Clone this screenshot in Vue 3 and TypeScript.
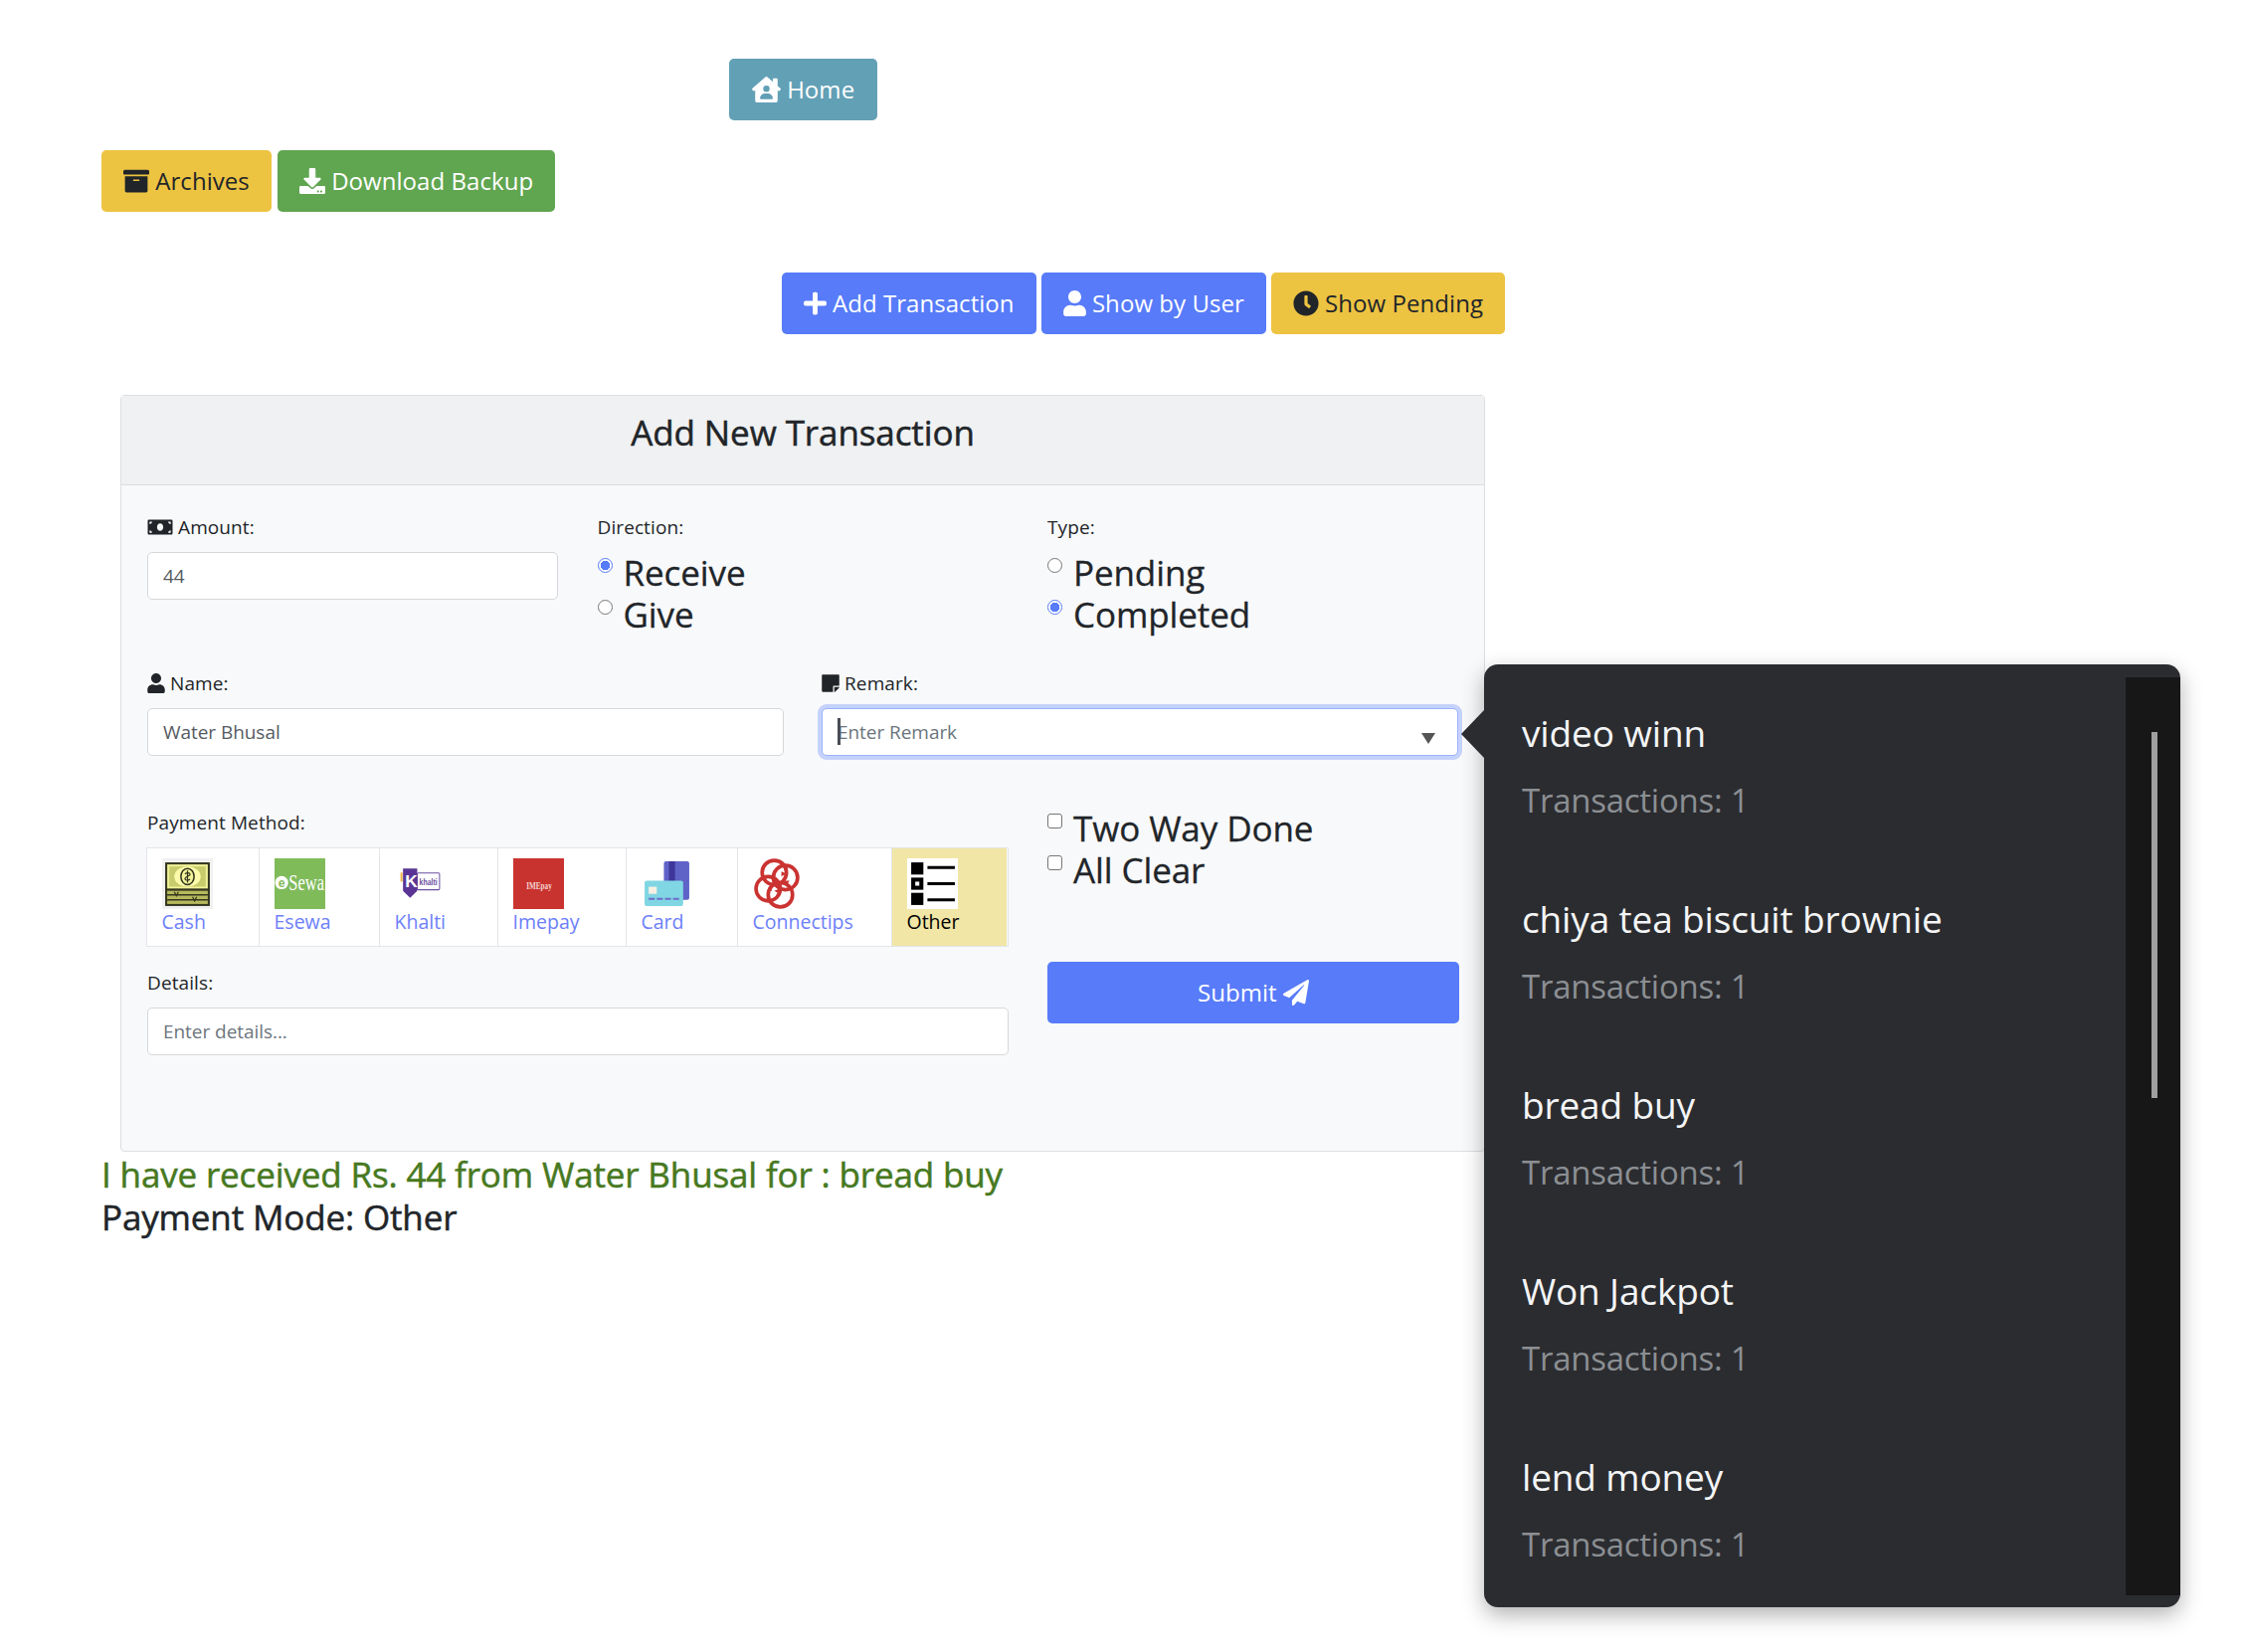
<template>
  <div class="page">
    <div class="container">
      <div class="home-row">
        <button class="btn info">
          <svg class="ico house" viewBox="0 0 576 512"><path d="M570.69,236.27,512,184.44V48a16,16,0,0,0-16-16H432a16,16,0,0,0-16,16V99.67L314.78,10.3C308.5,4.61,296.53,0,288,0s-20.46,4.61-26.74,10.3l-256,226A18.27,18.27,0,0,0,0,248.2a18.64,18.64,0,0,0,4.09,10.71L25.5,282.7a21.14,21.14,0,0,0,12,5.3,21.67,21.67,0,0,0,10.69-4.11l15.9-14V480a32,32,0,0,0,32,32H480a32,32,0,0,0,32-32V269.88l15.91,14A21.94,21.94,0,0,0,538.63,288a20.89,20.89,0,0,0,11.87-5.31l21.41-23.81A21.64,21.64,0,0,0,576,248.19,21,21,0,0,0,570.69,236.27ZM288,176a64,64,0,1,1-64,64A64,64,0,0,1,288,176ZM400,448H176a16,16,0,0,1-16-16,96,96,0,0,1,96-96h64a96,96,0,0,1,96,96A16,16,0,0,1,400,448Z" /></svg>
          Home
        </button>
      </div>

      <div class="backup-row">
        <button class="btn warning">
          <svg class="ico" viewBox="0 0 512 512"><path d="M32 448c0 17.7 14.3 32 32 32h384c17.7 0 32-14.3 32-32V160H32v288zm160-212c0-6.6 5.4-12 12-12h104c6.6 0 12 5.4 12 12v8c0 6.6-5.4 12-12 12H204c-6.6 0-12-5.4-12-12v-8zM480 32H32C14.3 32 0 46.3 0 64v48c0 8.8 7.2 16 16 16h480c8.8 0 16-7.2 16-16V64c0-17.7-14.3-32-32-32z" /></svg>
          Archives
        </button>
        <button class="btn success">
          <svg class="ico" viewBox="0 0 512 512"><path d="M216 0h80c13.3 0 24 10.7 24 24v168h87.7c17.8 0 26.7 21.5 14.1 34.1L269.7 378.3c-7.5 7.5-19.8 7.5-27.3 0L90.1 226.1c-12.6-12.6-3.7-34.1 14.1-34.1H192V24c0-13.3 10.7-24 24-24zm296 376v112c0 13.3-10.7 24-24 24H24c-13.3 0-24-10.7-24-24V376c0-13.3 10.7-24 24-24h146.7l49 49c20.1 20.1 52.5 20.1 72.6 0l49-49H488c13.3 0 24 10.7 24 24zm-124 88c0-11-9-20-20-20s-20 9-20 20 9 20 20 20 20-9 20-20zm64 0c0-11-9-20-20-20s-20 9-20 20 9 20 20 20 20-9 20-20z" /></svg>
          Download Backup
        </button>
      </div>

      <div class="action-row">
        <button class="btn primary">
          <svg class="ico narrow" viewBox="0 0 448 512"><path d="M416 208H272V64c0-17.67-14.33-32-32-32h-32c-17.67 0-32 14.33-32 32v144H32c-17.67 0-32 14.33-32 32v32c0 17.67 14.33 32 32 32h144v144c0 17.67 14.33 32 32 32h32c17.67 0 32-14.33 32-32V304h144c17.67 0 32-14.33 32-32v-32c0-17.67-14.33-32-32-32z" /></svg>
          Add Transaction
        </button>
        <button class="btn primary">
          <svg class="ico narrow" viewBox="0 0 448 512"><path :d="userPath" /></svg>
          Show by User
        </button>
        <button class="btn warning">
          <svg class="ico" viewBox="0 0 512 512"><path d="M256,8C119,8,8,119,8,256S119,504,256,504,504,393,504,256,393,8,256,8Zm92.49,313h0l-20,25a16,16,0,0,1-22.49,2.5h0l-67-49.72a40,40,0,0,1-15-31.23V112a16,16,0,0,1,16-16h32a16,16,0,0,1,16,16V256l58,42.5A16,16,0,0,1,348.49,321Z" /></svg>
          Show Pending
        </button>
      </div>

      <div class="card">
        <h2 class="card-title">Add New Transaction</h2>
        <div class="card-body">
          <div class="row-three">
            <div>
              <label class="label">
                <svg class="ico-sm wide" viewBox="0 0 640 512"><path d="M608 64H32C14.33 64 0 78.33 0 96v320c0 17.67 14.33 32 32 32h576c17.67 0 32-14.33 32-32V96c0-17.67-14.33-32-32-32zM48 400v-64c35.35 0 64 28.65 64 64H48zm0-224v-64h64c0 35.35-28.65 64-64 64zm272 176c-44.19 0-80-42.99-80-96 0-53.02 35.82-96 80-96s80 42.98 80 96c0 53.03-35.83 96-80 96zm272 48h-64c0-35.35 28.65-64 64-64v64zm0-224c-35.35 0-64-28.65-64-64h64v64z" /></svg>
                Amount:
              </label>
              <input v-model="amount" class="input" type="text" />
            </div>
            <div>
              <label class="label">Direction:</label>
              <label v-for="d in directions" :key="d" class="choice">
                <input v-model="direction" class="radio" type="radio" :value="d" />
                <span>{{ d }}</span>
              </label>
            </div>
            <div>
              <label class="label">Type:</label>
              <label v-for="t in types" :key="t" class="choice">
                <input v-model="txType" class="radio" type="radio" :value="t" />
                <span>{{ t }}</span>
              </label>
            </div>
          </div>

          <div class="row-two">
            <div>
              <label class="label">
                <svg class="ico-sm" viewBox="0 0 448 512"><path :d="userPath" /></svg>
                Name:
              </label>
              <input v-model="name" class="input" type="text" />
            </div>
            <div>
              <label class="label">
                <svg class="ico-sm" viewBox="0 0 448 512"><path d="M312 320h136V56c0-13.3-10.7-24-24-24H24C10.7 32 0 42.7 0 56v400c0 13.3 10.7 24 24 24h264V344c0-13.2 10.8-24 24-24zm129 55l-98 98c-4.5 4.5-10.6 7-17 7h-6V352h128v6.1c0 6.3-2.5 12.4-7 16.9z" /></svg>
                Remark:
              </label>
              <div class="remark-wrap">
                <input class="input focused" type="text" placeholder="Enter Remark" />
                <span class="caret"></span>
                <span class="drop-arrow"></span>
              </div>
            </div>
          </div>

          <div class="row-bottom">
            <div>
              <label class="label">Payment Method:</label>
              <div class="methods">
                <div
                  v-for="m in methods"
                  :key="m"
                  class="method"
                  :class="{ active: method === m }"
                  @click="method = m"
                >
                  <svg v-if="m === 'Cash'" class="logo" viewBox="0 0 50 50">
                    <rect width="50" height="50" fill="#f1f1f1" />
                    <rect x="4" y="5" width="42" height="26" fill="#f2f29a" stroke="#33351f" stroke-width="2" />
                    <rect x="7" y="8" width="36" height="20" fill="#c9cc6c" />
                    <ellipse cx="25" cy="18" rx="13" ry="10" fill="#fbfbab" />
                    <ellipse cx="25" cy="18" rx="6.5" ry="8" fill="#f2f29a" stroke="#33351f" stroke-width="1.5" />
                    <path d="M25 12v12M22.5 15.5c2-2 5-1 5 .5s-5 2-5 4 3 2 5 .5" fill="none" stroke="#33351f" stroke-width="1.2" />
                    <rect x="4" y="31" width="42" height="15" fill="#b7ba5c" stroke="#33351f" stroke-width="2" />
                    <path d="M5 36h40M5 41h40" stroke="#33351f" stroke-width="1.5" />
                    <path d="M12 33l2 4 2-4M30 38l2 4 2-4" fill="none" stroke="#33351f" stroke-width="1.2" />
                  </svg>
                  <svg v-else-if="m === 'Esewa'" class="logo" viewBox="0 0 50 50">
                    <rect width="50" height="50" fill="#80bb5a" />
                    <circle cx="7" cy="24" r="6.5" fill="#fff" />
                    <text x="3.6" y="28" class="logo-e">e</text>
                    <text x="14" y="31" class="logo-sewa" textLength="35" lengthAdjust="spacingAndGlyphs">Sewa</text>
                  </svg>
                  <svg v-else-if="m === 'Khalti'" class="logo" viewBox="0 0 50 50">
                    <rect x="22" y="14.5" width="22" height="16.5" rx="1" fill="#fff" stroke="#6d4fa3" stroke-width="1" />
                    <text x="24" y="26.5" class="logo-khalti" textLength="18" lengthAdjust="spacingAndGlyphs">khalti</text>
                    <rect x="5.5" y="14" width="2" height="9" fill="#f0b64a" />
                    <path d="M8 10h14v22l-7 7-7-7z" fill="#5a3595" />
                    <text x="10" y="28" class="logo-k">K</text>
                  </svg>
                  <svg v-else-if="m === 'Imepay'" class="logo" viewBox="0 0 50 50">
                    <rect width="50" height="50" fill="#c9332f" />
                    <text x="13" y="30" class="logo-ime" textLength="25" lengthAdjust="spacingAndGlyphs">IMEpay</text>
                  </svg>
                  <svg v-else-if="m === 'Card'" class="logo" viewBox="0 0 50 50">
                    <rect x="22" y="3" width="25" height="38" rx="2" fill="#5f63c7" />
                    <rect x="27" y="3" width="6" height="38" fill="#3e3699" />
                    <rect x="3" y="22" width="38" height="25" rx="2" fill="#80d6e3" />
                    <rect x="7" y="28" width="8" height="7" fill="#f6f0e4" />
                    <path d="M7 40h30" stroke="#6a6bc9" stroke-width="2" stroke-dasharray="6 2" />
                  </svg>
                  <svg v-else-if="m === 'Connectips'" class="logo" viewBox="0 0 50 50">
                    <g fill="none" stroke="#ca3331" stroke-width="3.6">
                      <circle cx="21" cy="14" r="12" />
                      <circle cx="32" cy="19" r="12" />
                      <circle cx="15" cy="30" r="12" />
                      <circle cx="27" cy="36" r="12" />
                    </g>
                    <path d="M28 13l5 2-5 3zM31 22l2 5 3-5zM14 32l2-5 3 5zM26 30l-5 2 5 3z" fill="#ca3331" />
                  </svg>
                  <svg v-else class="logo" viewBox="0 0 50 50">
                    <rect width="50" height="50" fill="#fff" />
                    <rect x="4" y="4" width="12" height="12" />
                    <rect x="4" y="19" width="12" height="12" />
                    <rect x="8" y="23" width="4" height="4" fill="#fff" />
                    <rect x="4" y="34" width="12" height="12" />
                    <path d="M20 9h27M20 25h27M20 41h27" stroke="#000" stroke-width="3" />
                  </svg>
                  <span class="method-name">{{ m }}</span>
                </div>
              </div>
              <label class="label details-label">Details:</label>
              <input class="input" type="text" placeholder="Enter details..." />
            </div>
            <div>
              <label v-for="c in checks" :key="c" class="choice">
                <input class="check" type="checkbox" />
                <span>{{ c }}</span>
              </label>
              <button class="btn primary submit">
                Submit
                <svg class="ico-plane" viewBox="0 0 512 512"><path d="M476 3.2L12.5 270.6c-18.1 10.4-15.8 35.6 2.2 43.2L121 358.4l287.3-253.2c5.5-4.9 13.3 2.6 8.6 8.3L176 407v80.5c0 23.6 28.5 32.9 42.5 15.8L282 426l124.6 52.2c14.2 6 30.4-2.9 33-18.2l72-432C515 7.8 493.3-6.8 476 3.2z" /></svg>
              </button>
            </div>
          </div>
        </div>
      </div>

      <div class="message">
        <div class="message-green">I have received Rs. 44 from Water Bhusal for : bread buy</div>
        <div>Payment Mode: Other</div>
      </div>
    </div>

    <div class="popover">
      <span class="popover-arrow"></span>
      <div class="popover-list">
        <div v-for="s in suggestions" :key="s" class="suggestion">
          <div class="suggestion-name">{{ s }}</div>
          <div class="suggestion-count">Transactions: 1</div>
        </div>
      </div>
      <div class="scroll-track"><div class="scroll-thumb"></div></div>
    </div>
  </div>
</template>

<script setup lang="ts">
import { ref } from 'vue'

const userPath =
  'M224 256c70.7 0 128-57.3 128-128S294.7 0 224 0 96 57.3 96 128s57.3 128 128 128zm89.6 32h-16.7c-22.2 10.2-46.9 16-72.9 16s-50.6-5.8-72.9-16h-16.7C60.2 288 0 348.2 0 422.4V464c0 26.5 21.5 48 48 48h352c26.5 0 48-21.5 48-48v-41.6c0-74.2-60.2-134.4-134.4-134.4z'

const directions = ['Receive', 'Give']
const types = ['Pending', 'Completed']
const checks = ['Two Way Done', 'All Clear']
const methods = ['Cash', 'Esewa', 'Khalti', 'Imepay', 'Card', 'Connectips', 'Other']
const suggestions = ['video winn', 'chiya tea biscuit brownie', 'bread buy', 'Won Jackpot', 'lend money']

const amount = ref('44')
const name = ref('Water Bhusal')
const direction = ref('Receive')
const txType = ref('Completed')
const method = ref('Other')
</script>

<style>
html,
body {
  background: #fff;
}
</style>

<style scoped>
.page {
  position: relative;
  height: 1661px;
  overflow: hidden;
  font-family: 'Open Sans', 'Noto Sans', sans-serif;
  color: #212529;
}

.container {
  width: 1411px;
  margin-left: 102px;
  padding-top: 59px;
}

.home-row {
  text-align: center;
}

.backup-row {
  display: flex;
  gap: 6px;
  margin-top: 30px;
}

.action-row {
  display: flex;
  justify-content: flex-end;
  gap: 5px;
  margin-top: 61px;
}

.btn {
  height: 62px;
  padding: 0 22px 2px;
  border: none;
  border-radius: 5px;
  font-family: inherit;
  font-size: 24px;
  letter-spacing: 0.05px;
  white-space: nowrap;
}

.btn.info {
  padding: 0 23px 2px;
  background: #62a0b6;
  color: #fff;
}

.btn.warning {
  background: #edc342;
  color: #212529;
}

.btn.success {
  background: #60a550;
  color: #fff;
}

.btn.primary {
  background: #577bf9;
  color: #fff;
}

.ico {
  width: 26px;
  height: 26px;
  fill: currentColor;
  vertical-align: -4px;
}

.ico.house {
  width: 29px;
}

.ico.narrow {
  width: 23px;
}

.ico-sm {
  width: 18px;
  height: 20px;
  fill: currentColor;
  vertical-align: -3px;
}

.ico-sm.wide {
  width: 26px;
}

.ico-plane {
  width: 26px;
  height: 26px;
  fill: #fff;
  vertical-align: -4px;
}

.card {
  margin: 61px 20px 0 19px;
  height: 761px;
  box-sizing: border-box;
  border: 1.5px solid #dcdee0;
  border-radius: 4px;
  background: #f8f9fa;
}

.card-title {
  margin: 0;
  height: 90px;
  box-sizing: border-box;
  padding-top: 12px;
  border-bottom: 1.5px solid #dcdee0;
  background: #f0f1f2;
  font-size: 35px;
  font-weight: 400;
  line-height: 50px;
  letter-spacing: -0.1px;
  text-align: center;
  -webkit-text-stroke: 0.5px #212529;
}

.card-body {
  padding: 27px 25px 0 26px;
}

.row-three {
  display: grid;
  grid-template-columns: repeat(3, 413px);
  column-gap: 39.5px;
}

.row-two {
  display: grid;
  grid-template-columns: 640px 640px;
  column-gap: 38px;
  margin-top: 33px;
}

.row-bottom {
  display: grid;
  grid-template-columns: 866px 414px;
  column-gap: 39px;
  margin-top: 52px;
}

.label {
  display: block;
  height: 31px;
  margin-bottom: 9px;
  font-size: 19px;
  line-height: 31px;
  letter-spacing: 0.1px;
}

.details-label {
  margin-top: 21px;
  margin-bottom: 9px;
}

.input {
  display: block;
  width: 100%;
  height: 48px;
  box-sizing: border-box;
  padding: 0 15px;
  border: 1.5px solid #d6d8db;
  border-radius: 5px;
  background: #fff;
  color: #555b62;
  font-family: inherit;
  font-size: 19px;
  letter-spacing: -0.05px;
  outline: none;
}

.input::placeholder {
  color: #6c757d;
}

.input.focused {
  border-color: #9ab3fc;
  box-shadow: 0 0 0 4px #c5d2fb;
}

.remark-wrap {
  position: relative;
}

.caret {
  position: absolute;
  left: 16px;
  top: 10px;
  width: 3px;
  height: 27px;
  background: #4a4d55;
}

.drop-arrow {
  position: absolute;
  right: 23px;
  top: 25px;
  border-left: 7px solid transparent;
  border-right: 7px solid transparent;
  border-top: 11px solid #555;
}

.choice {
  display: flex;
  align-items: flex-start;
  gap: 11px;
  height: 42px;
  font-size: 35px;
  line-height: 42px;
  letter-spacing: -0.1px;
  -webkit-text-stroke: 0.3px #212529;
}

.radio,
.check {
  appearance: none;
  flex: none;
  width: 15px;
  height: 15px;
  margin: 6px 0 0;
  box-sizing: border-box;
  border: 1.5px solid #767676;
  background: #fff;
}

.radio {
  border-radius: 50%;
}

.radio:checked {
  border-color: #577bf9;
  background: radial-gradient(circle, #577bf9 0 4.5px, #fff 5px);
}

.check {
  border-radius: 3px;
}

.methods {
  display: grid;
  grid-template-columns: 112px 121px 119px 129px 112px 155px 116.5px;
  height: 100px;
  margin-left: -1.5px;
  box-sizing: border-box;
  border: 1.5px solid #e3e5e8;
}

.method {
  display: flex;
  flex-direction: column;
  padding: 9.5px 0 0 15px;
  border-left: 1.5px solid #e3e5e8;
  background: #fff;
  color: #6d7ff9;
  box-sizing: border-box;
}

.method:first-child {
  border-left: none;
}

.method.active {
  background: #f1e6a6;
  color: #000;
}

.logo {
  display: block;
  width: 51px;
  height: 51px;
}

.method-name {
  font-size: 19.5px;
  line-height: 26px;
}

.logo-e {
  font: 700 12px 'Liberation Sans', sans-serif;
  fill: #80bb5a;
}

.logo-sewa {
  font: 22px 'Liberation Serif', serif;
  fill: #fff;
}

.logo-khalti {
  font: 700 9px 'Liberation Sans', sans-serif;
  fill: #6d4fa3;
}

.logo-k {
  font: 700 17px 'Liberation Sans', sans-serif;
  fill: #fff;
}

.logo-ime {
  font: 700 10px 'Liberation Serif', serif;
  fill: #f3d4d0;
}

.submit {
  display: block;
  width: 100%;
  margin-top: 71px;
}

.message {
  margin-top: 1px;
  font-size: 35px;
  line-height: 43px;
  letter-spacing: -0.15px;
  -webkit-text-stroke: 0.5px #212529;
}

.message-green {
  color: #47791f;
  -webkit-text-stroke: 0.5px #47791f;
}

.popover {
  position: absolute;
  left: 1492px;
  top: 668px;
  display: flex;
  width: 700px;
  height: 948px;
  box-sizing: border-box;
  padding: 13px 0 12px;
  border-radius: 14px;
  background: #2b2c30;
  box-shadow: 0 8px 22px rgba(0, 0, 0, 0.3);
}

.popover-arrow {
  position: absolute;
  left: -23px;
  top: 46px;
  border-top: 24px solid transparent;
  border-bottom: 24px solid transparent;
  border-right: 23px solid #2b2c30;
}

.popover-list {
  flex: 1;
  padding: 26px 0 0 38px;
  overflow: hidden;
}

.suggestion {
  height: 187px;
}

.suggestion-name {
  color: #f4f5f6;
  font-size: 37px;
  line-height: 60px;
  letter-spacing: -0.15px;
}

.suggestion-count {
  margin-top: 11px;
  color: #8b8f93;
  font-size: 33px;
  line-height: 54px;
  letter-spacing: -0.25px;
}

.scroll-track {
  flex: none;
  width: 55px;
  padding: 55px 0 0 26px;
  box-sizing: border-box;
  background: #171717;
}

.scroll-thumb {
  width: 6px;
  height: 368px;
  background: #a0a0a0;
}
</style>
